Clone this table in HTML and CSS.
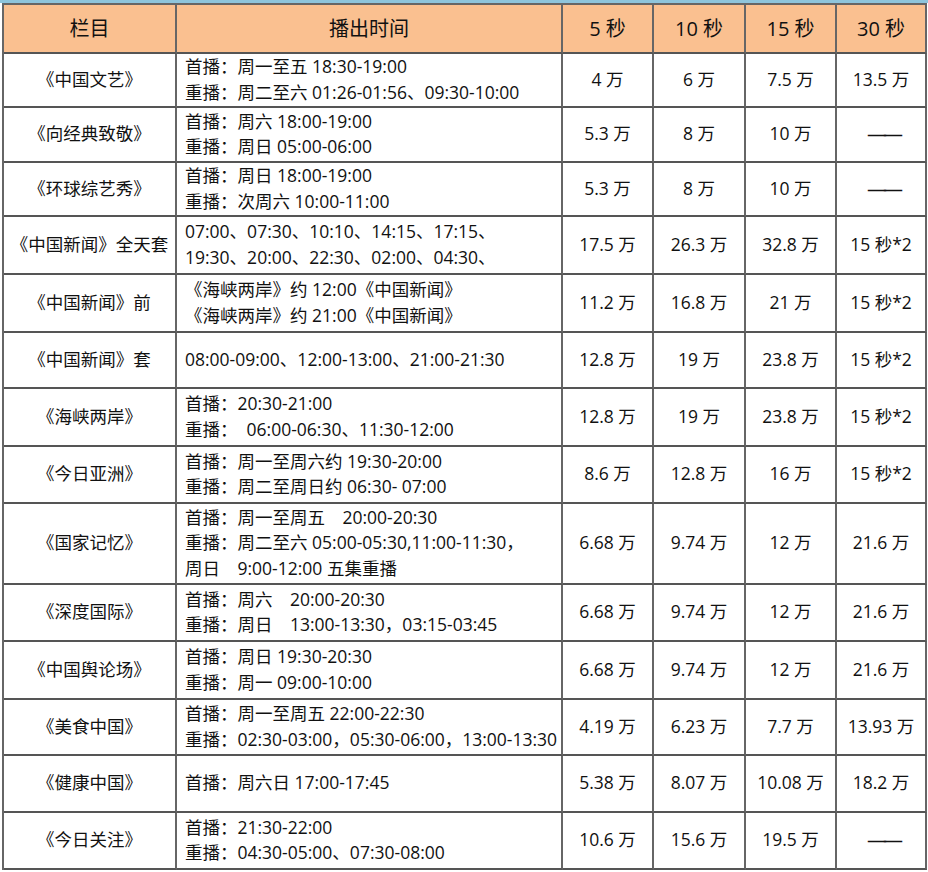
FILE: index.html
```html
<!DOCTYPE html>
<html lang="zh-CN">
<head>
<meta charset="utf-8">
<title>栏目报价</title>
<link rel="stylesheet" href="styles.css">
</head>
<body>
<div class="topbar"></div>
<div class="sheet">
  <div class="cell head">栏目</div>
  <div class="cell head">播出时间</div>
  <div class="cell head">5 秒</div>
  <div class="cell head">10 秒</div>
  <div class="cell head">15 秒</div>
  <div class="cell head">30 秒</div>

  <div class="cell name">《中国文艺》</div>
  <div class="cell time"><div>首播：周一至五 18:30-19:00</div><div>重播：周二至六 01:26-01:56、09:30-10:00</div></div>
  <div class="cell num">4 万</div><div class="cell num">6 万</div><div class="cell num">7.5 万</div><div class="cell num">13.5 万</div>

  <div class="cell name">《向经典致敬》</div>
  <div class="cell time"><div>首播：周六 18:00-19:00</div><div>重播：周日 05:00-06:00</div></div>
  <div class="cell num">5.3 万</div><div class="cell num">8 万</div><div class="cell num">10 万</div><div class="cell num dash"><span>——</span></div>

  <div class="cell name">《环球综艺秀》</div>
  <div class="cell time"><div>首播：周日 18:00-19:00</div><div>重播：次周六 10:00-11:00</div></div>
  <div class="cell num">5.3 万</div><div class="cell num">8 万</div><div class="cell num">10 万</div><div class="cell num dash"><span>——</span></div>

  <div class="cell name">《中国新闻》全天套</div>
  <div class="cell time"><div>07:00、07:30、10:10、14:15、17:15、</div><div>19:30、20:00、22:30、02:00、04:30、</div></div>
  <div class="cell num">17.5 万</div><div class="cell num">26.3 万</div><div class="cell num">32.8 万</div><div class="cell num">15 秒*2</div>

  <div class="cell name">《中国新闻》前</div>
  <div class="cell time"><div>《海峡两岸》约 12:00《中国新闻》</div><div>《海峡两岸》约 21:00《中国新闻》</div></div>
  <div class="cell num">11.2 万</div><div class="cell num">16.8 万</div><div class="cell num">21 万</div><div class="cell num">15 秒*2</div>

  <div class="cell name">《中国新闻》套</div>
  <div class="cell time"><div>08:00-09:00、12:00-13:00、21:00-21:30</div></div>
  <div class="cell num">12.8 万</div><div class="cell num">19 万</div><div class="cell num">23.8 万</div><div class="cell num">15 秒*2</div>

  <div class="cell name">《海峡两岸》</div>
  <div class="cell time"><div>首播：20:30-21:00</div><div>重播：&nbsp; 06:00-06:30、11:30-12:00</div></div>
  <div class="cell num">12.8 万</div><div class="cell num">19 万</div><div class="cell num">23.8 万</div><div class="cell num">15 秒*2</div>

  <div class="cell name">《今日亚洲》</div>
  <div class="cell time"><div>首播：周一至周六约 19:30-20:00</div><div>重播：周二至周日约 06:30- 07:00</div></div>
  <div class="cell num">8.6 万</div><div class="cell num">12.8 万</div><div class="cell num">16 万</div><div class="cell num">15 秒*2</div>

  <div class="cell name">《国家记忆》</div>
  <div class="cell time"><div>首播：周一至周五　20:00-20:30</div><div>重播：周二至六 05:00-05:30,11:00-11:30，</div><div>周日　9:00-12:00 五集重播</div></div>
  <div class="cell num">6.68 万</div><div class="cell num">9.74 万</div><div class="cell num">12 万</div><div class="cell num">21.6 万</div>

  <div class="cell name">《深度国际》</div>
  <div class="cell time"><div>首播：周六　20:00-20:30</div><div>重播：周日　13:00-13:30，03:15-03:45</div></div>
  <div class="cell num">6.68 万</div><div class="cell num">9.74 万</div><div class="cell num">12 万</div><div class="cell num">21.6 万</div>

  <div class="cell name">《中国舆论场》</div>
  <div class="cell time"><div>首播：周日 19:30-20:30</div><div>重播：周一 09:00-10:00</div></div>
  <div class="cell num">6.68 万</div><div class="cell num">9.74 万</div><div class="cell num">12 万</div><div class="cell num">21.6 万</div>

  <div class="cell name">《美食中国》</div>
  <div class="cell time"><div>首播：周一至周五 22:00-22:30</div><div>重播：02:30-03:00，05:30-06:00，13:00-13:30</div></div>
  <div class="cell num">4.19 万</div><div class="cell num">6.23 万</div><div class="cell num">7.7 万</div><div class="cell num">13.93 万</div>

  <div class="cell name">《健康中国》</div>
  <div class="cell time"><div>首播：周六日 17:00-17:45</div></div>
  <div class="cell num">5.38 万</div><div class="cell num">8.07 万</div><div class="cell num">10.08 万</div><div class="cell num">18.2 万</div>

  <div class="cell name">《今日关注》</div>
  <div class="cell time"><div>首播：21:30-22:00</div><div>重播：04:30-05:00、07:30-08:00</div></div>
  <div class="cell num">10.6 万</div><div class="cell num">15.6 万</div><div class="cell num">19.5 万</div><div class="cell num dash"><span>——</span></div>
</div>
</body>
</html>
```
FILE: styles.css
```css
html, body {
  margin: 0;
  padding: 0;
  background: #ffffff;
}
body {
  width: 928px;
  height: 872px;
  overflow: hidden;
  font-family: "Open Sans", "Noto Sans CJK SC", sans-serif;
  color: #111111;
}
.topbar {
  height: 3px;
  background: #8ec5dc;
}
.sheet {
  margin-left: 2px;
  width: 925px;
  display: grid;
  grid-template-columns: 173px 386px 91px 92px 91px 90px;
  grid-template-rows: 49px 54px 55px 54px 58px 58px 56px 58px 57px 81px 57px 58px 56px 57px 57px;
  border-top: 2px solid #666666;
  border-left: 2px solid #666666;
  box-sizing: border-box;
}
.cell {
  box-sizing: border-box;
  border-right: 2px solid #666666;
  border-bottom: 2px solid #555555;
  display: flex;
  flex-direction: column;
  justify-content: center;
  font-size: 17.5px;
  line-height: 25.5px;
  white-space: nowrap;
}
.head {
  background: #fac090;
  align-items: center;
  font-size: 20px;
}
.name {
  align-items: center;
  padding-bottom: 1px;
}
.time {
  align-items: flex-start;
  padding-left: 8px;
  padding-bottom: 1px;
}
.num {
  align-items: center;
  padding-bottom: 1px;
}
.dash span {
  display: inline-block;
  font-size: 20px;
  letter-spacing: -4px;
  margin-right: -4px;
}
```
